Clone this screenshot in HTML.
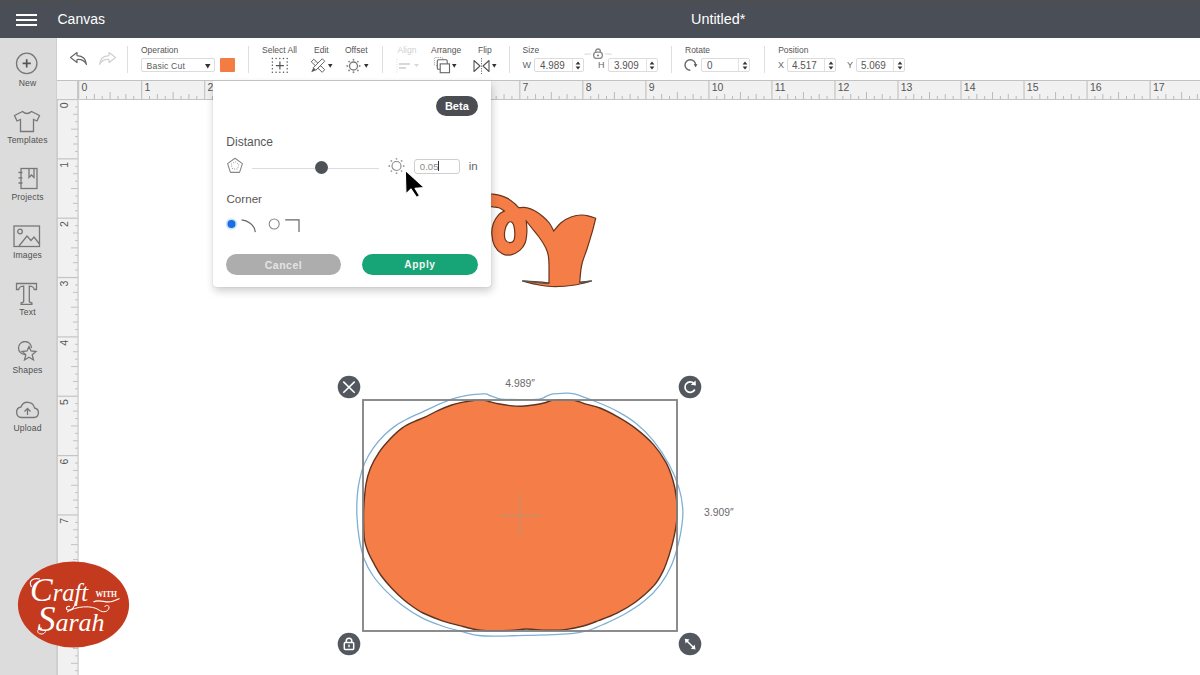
<!DOCTYPE html><html><head><meta charset="utf-8"><title>Canvas</title><style>
*{margin:0;padding:0;box-sizing:border-box}
html,body{width:1200px;height:675px;overflow:hidden;background:#fff;font-family:"Liberation Sans",sans-serif}
.a{position:absolute}
#hdr{left:0;top:0;width:1200px;height:38px;background:linear-gradient(#4b4e52 0,#4b4e52 5px,#4a4e56 6px)}
#side{left:0;top:38px;width:57px;height:637px;background:#dcdcdc;border-right:1px solid #cfcfcf}
#tool{left:57px;top:38px;width:1143px;height:42.5px;background:#fff;border-bottom:1.5px solid #c6c6c6}
.lbl{font-size:8.5px;color:#555;white-space:nowrap;line-height:1;margin-top:0.5px}
.slbl{font-size:8.6px;color:#505050;white-space:nowrap;line-height:1;text-align:center;width:55px;left:0;letter-spacing:0.15px}
.sep{width:1px;background:#dedede;top:46px;height:27px}
.inp{border:1px solid #dcdcdc;border-radius:2px;height:14px;background:#fff}
.inp span{position:absolute;left:5px;top:1.6px;font-size:10px;color:#555;line-height:1}
.spin{position:absolute;right:0;top:0;width:10px;height:12px;border-left:1px solid #e2e2e2}
</style></head><body>
<div id="hdr" class="a">
<div class="a" style="left:16px;top:14px;width:21px;height:2px;background:#fff"></div>
<div class="a" style="left:16px;top:19px;width:21px;height:2px;background:#fff"></div>
<div class="a" style="left:16px;top:24px;width:21px;height:2px;background:#fff"></div>
<div class="a" style="left:57.5px;top:10.6px;font-size:14px;color:#fff;line-height:17px">Canvas</div>
<div class="a" style="left:691px;top:10.6px;font-size:14.4px;color:#fff;line-height:17px">Untitled*</div>
</div>
<div id="side" class="a"></div>
<svg class="a" style="left:15px;top:52px" width="24" height="24" viewBox="0 0 24 24"><circle cx="11.7" cy="11.4" r="10.2" stroke="#777" stroke-width="1.3" fill="none"/><path d="M11.7 7.3v8.2M7.6 11.4h8.2" stroke="#555" stroke-width="1.7" fill="none"/></svg>
<div class="a slbl" style="top:78.5px">New</div>
<svg class="a" style="left:13px;top:110px" width="28" height="23" viewBox="0 0 28 23"><path d="M9.5 1.5 L1.5 5.5 L4 11 L7.5 9.5 L7.5 21.5 L20.5 21.5 L20.5 9.5 L24 11 L26.5 5.5 L18.5 1.5 Q14 5.5 9.5 1.5Z" stroke="#777" stroke-width="1.3" fill="none"/></svg>
<div class="a slbl" style="top:136px">Templates</div>
<svg class="a" style="left:17px;top:167px" width="22" height="23" viewBox="0 0 22 23"><rect x="4" y="1.5" width="16" height="20" stroke="#777" stroke-width="1.3" fill="none"/><path d="M12 1.5v9l2.5-2.5 2.5 2.5V1.5" stroke="#777" stroke-width="1.3" fill="none"/><path d="M1.5 5.5h4M1.5 10.8h4M1.5 16h4" stroke="#777" stroke-width="1.3" fill="none"/></svg>
<div class="a slbl" style="top:193px">Projects</div>
<svg class="a" style="left:13px;top:225px" width="28" height="23" viewBox="0 0 28 23"><rect x="1" y="1" width="25.5" height="20.5" stroke="#777" stroke-width="1.3" fill="none"/><circle cx="7" cy="6.5" r="2.3" stroke="#777" stroke-width="1.3" fill="none"/><path d="M6 21 L14 11 L18 15.5 L21 12 L26.5 19" stroke="#777" stroke-width="1.3" fill="none"/></svg>
<div class="a slbl" style="top:251px">Images</div>
<svg class="a" style="left:15px;top:282px" width="24" height="24" viewBox="0 0 24 24"><path d="M1.5 1.5h20v6h-2.2c-.6-2.5-1.4-3.4-5-3.4v15c0 1.2.8 1.7 2.6 1.9v1.3H6.1v-1.3c1.8-.2 2.6-.7 2.6-1.9v-15c-3.6 0-4.4.9-5 3.4H1.5z" stroke="#777" stroke-width="1.3" fill="none"/></svg>
<div class="a slbl" style="top:308px">Text</div>
<svg class="a" style="left:16px;top:341px" width="22" height="22" viewBox="0 0 22 22"><path d="M9 13.5 A6.5 6.5 0 1 1 15.5 7" stroke="#777" stroke-width="1.3" fill="none"/><path d="M13 5.5 L15 10 L20 10.5 L16.2 13.8 L17.5 19 L13 16.3 L8.5 19 L9.8 13.8 L6 10.5 L11 10Z" stroke="#777" stroke-width="1.3" fill="none"/></svg>
<div class="a slbl" style="top:366px">Shapes</div>
<svg class="a" style="left:15px;top:400px" width="25" height="19" viewBox="0 0 25 19"><path d="M6.5 17.5 H19 A4.8 4.8 0 0 0 19.5 8 A7 7 0 0 0 6 7 A5.3 5.3 0 0 0 6.5 17.5Z" stroke="#777" stroke-width="1.3" fill="none"/><path d="M12.5 15V8.5M9.5 11.5l3-3 3 3" stroke="#777" stroke-width="1.3" fill="none"/></svg>
<div class="a slbl" style="top:424px">Upload</div>
<div id="tool" class="a"></div>
<svg class="a" style="left:69px;top:51px" width="20" height="16" viewBox="0 0 20 16"><path d="M8 1.5 L1.5 6.5 L8 11.5 L8 8.5 C12 8.2 15.5 9.5 17.5 13.5 C17 8 13.5 4.8 8 4.6Z" stroke="#666" stroke-width="1.2" fill="none" stroke-linejoin="round"/></svg>
<svg class="a" style="left:97px;top:51px" width="20" height="16" viewBox="0 0 20 16"><path d="M12 1.5 L18.5 6.5 L12 11.5 L12 8.5 C8 8.2 4.5 9.5 2.5 13.5 C3 8 6.5 4.8 12 4.6Z" stroke="#d0d0d0" stroke-width="1.2" fill="none" stroke-linejoin="round"/></svg>
<div class="a sep" style="left:127px"></div>
<div class="a lbl" style="left:141px;top:45px">Operation</div>
<div class="a inp" style="left:140.5px;top:58px;width:74px"><span style="left:5px;top:2.6px;font-size:8.6px;letter-spacing:0.2px;color:#5a5a5a">Basic Cut</span></div>
<svg class="a" style="left:205px;top:63.5px" width="6" height="5" viewBox="0 0 6 5"><path d="M0 0h5.5L2.75 4.5z" fill="#333"/></svg>
<div class="a" style="left:219.7px;top:58px;width:15.5px;height:14.2px;background:#f27c42;border-radius:1px"></div>
<div class="a sep" style="left:248px"></div>
<div class="a lbl" style="left:262px;top:45px">Select All</div>
<svg class="a" style="left:268px;top:54px" width="24" height="22" viewBox="0 0 24 22"><g fill="#555"><circle cx="4.4" cy="4.4" r="0.75"/><circle cx="4.4" cy="7.9" r="0.75"/><circle cx="4.4" cy="11.3" r="0.75"/><circle cx="4.4" cy="14.8" r="0.75"/><circle cx="4.4" cy="18.3" r="0.75"/><circle cx="8.1" cy="4.4" r="0.75"/><circle cx="8.1" cy="18.3" r="0.75"/><circle cx="11.8" cy="4.4" r="0.75"/><circle cx="11.8" cy="18.3" r="0.75"/><circle cx="15.5" cy="4.4" r="0.75"/><circle cx="15.5" cy="18.3" r="0.75"/><circle cx="19.2" cy="4.4" r="0.75"/><circle cx="19.2" cy="7.9" r="0.75"/><circle cx="19.2" cy="11.3" r="0.75"/><circle cx="19.2" cy="14.8" r="0.75"/><circle cx="19.2" cy="18.3" r="0.75"/></g><path d="M11.9 7.6v8M7.9 11.6h8" stroke="#555" stroke-width="1.2"/></svg>
<div class="a lbl" style="left:314px;top:45px">Edit</div>
<svg class="a" style="left:310px;top:58px" width="17" height="15" viewBox="0 0 17 15"><path d="M3.74 1.2 L14.74 11.7 L12.26 14.3 L1.26 3.8Z" stroke="#666" stroke-width="1" fill="#fff"/><path d="M4.5 4.5l1-1M7 6.8l1-1M9.5 9.1l1-1" stroke="#888" stroke-width="0.8"/><path d="M5.77 12.27 L14.77 3.27 L12.23 0.73 L3.23 9.73Z" stroke="#666" stroke-width="1" fill="#fff"/><path d="M3.23 9.73 L5.77 12.27 L1.3 14.2Z" fill="#555"/></svg>
<svg class="a" style="left:328px;top:63.5px" width="5" height="4" viewBox="0 0 5 4"><path d="M0 0h4.5L2.25 3.8z" fill="#333"/></svg>
<div class="a lbl" style="left:345px;top:45px">Offset</div>
<svg class="a" style="left:346px;top:58px" width="16" height="16" viewBox="0 0 16 16"><circle cx="7.5" cy="8" r="4" stroke="#777" stroke-width="1.3" fill="none"/><g fill="#888"><circle cx="13.70" cy="8.00" r="0.95"/><circle cx="11.88" cy="12.38" r="0.95"/><circle cx="7.50" cy="14.20" r="0.95"/><circle cx="3.12" cy="12.38" r="0.95"/><circle cx="1.30" cy="8.00" r="0.95"/><circle cx="3.12" cy="3.62" r="0.95"/><circle cx="7.50" cy="1.80" r="0.95"/><circle cx="11.88" cy="3.62" r="0.95"/></g></svg>
<svg class="a" style="left:364px;top:63.5px" width="5" height="4" viewBox="0 0 5 4"><path d="M0 0h4.5L2.25 3.8z" fill="#333"/></svg>
<div class="a sep" style="left:382px"></div>
<div class="a lbl" style="left:397.5px;top:45px;color:#cfcfcf">Align</div>
<svg class="a" style="left:396px;top:58px" width="24" height="16" viewBox="0 0 24 16"><path d="M1 1v14" stroke="#ddd" stroke-dasharray="1 1.5"/><path d="M3 6h11M3 10h7" stroke="#d8d8d8" stroke-width="2"/><path d="M18 6h5l-2.5 3z" fill="#d8d8d8"/></svg>
<div class="a lbl" style="left:431px;top:45px">Arrange</div>
<svg class="a" style="left:433px;top:56px" width="18" height="18" viewBox="0 0 18 18"><rect x="1.4" y="1.5" width="8.4" height="8" rx="1" stroke="#999" stroke-width="0.9" stroke-dasharray="1.2 1" fill="none"/><rect x="4.3" y="3.8" width="9.9" height="9.4" rx="1" stroke="#666" stroke-width="1.1" fill="#fff"/><rect x="7.2" y="7.9" width="9.3" height="8.8" stroke="#666" stroke-width="1.1" fill="#fff"/></svg>
<svg class="a" style="left:451.8px;top:63.8px" width="5" height="4" viewBox="0 0 5 4"><path d="M0 0h4.5L2.25 3.8z" fill="#333"/></svg>
<div class="a lbl" style="left:478px;top:45px">Flip</div>
<svg class="a" style="left:473px;top:58px" width="17" height="16" viewBox="0 0 17 16"><path d="M1 2.5v11l6-5.5z" stroke="#555" stroke-width="1.1" fill="none" stroke-linejoin="round"/><path d="M16 2.5v11l-6-5.5z" stroke="#555" stroke-width="1.1" fill="none" stroke-linejoin="round"/><path d="M8.5 0v16" stroke="#777" stroke-width="1" stroke-dasharray="1.3 1.2"/></svg>
<svg class="a" style="left:492px;top:63.5px" width="5" height="4" viewBox="0 0 5 4"><path d="M0 0h4.5L2.25 3.8z" fill="#333"/></svg>
<div class="a sep" style="left:509px"></div>
<div class="a lbl" style="left:522.6px;top:45px">Size</div>
<div class="a lbl" style="left:522.6px;top:60.5px;font-size:9px;color:#666">W</div>
<div class="a inp" style="left:534.2px;top:58.2px;width:49.4px;height:13.9px"><span style="left:4.6px;top:0.9px;font-size:10.6px;transform:scaleX(0.93);transform-origin:0 0">4.989</span><div class="spin" style="width:11px;height:11.9px"><svg class="a" style="left:2.6px;top:1.5px" width="6" height="9" viewBox="0 0 6 9"><path d="M0.6 3.6L3 0.4 5.4 3.6zM0.6 5.4L3 8.6 5.4 5.4z" fill="#333"/></svg></div></div>
<svg class="a" style="left:584px;top:47px" width="28" height="12" viewBox="0 0 28 12"><path d="M1 8V7h6M21 7h6v1" stroke="#d4d4d4" stroke-width="0.9" fill="none"/><rect x="9.6" y="5.2" width="8.8" height="6.3" rx="3" stroke="#888" stroke-width="1.3" fill="#fff"/><path d="M11.6 5.6V4.4a2.4 2.4 0 0 1 4.8 0v1.2" stroke="#888" stroke-width="1.3" fill="none"/><circle cx="14" cy="8.4" r="0.9" fill="#666"/></svg>
<div class="a lbl" style="left:598px;top:60.5px;font-size:9px;color:#666">H</div>
<div class="a inp" style="left:608.4000000000001px;top:58.2px;width:49.4px;height:13.9px"><span style="left:4.6px;top:0.9px;font-size:10.6px;transform:scaleX(0.93);transform-origin:0 0">3.909</span><div class="spin" style="width:11px;height:11.9px"><svg class="a" style="left:2.6px;top:1.5px" width="6" height="9" viewBox="0 0 6 9"><path d="M0.6 3.6L3 0.4 5.4 3.6zM0.6 5.4L3 8.6 5.4 5.4z" fill="#333"/></svg></div></div>
<div class="a sep" style="left:671px"></div>
<div class="a lbl" style="left:685px;top:45px">Rotate</div>
<svg class="a" style="left:684px;top:58px" width="14" height="14" viewBox="0 0 14 14"><path d="M6.3 12.3 A5.3 5.3 0 1 1 11.6 7" stroke="#666" stroke-width="1.4" fill="none"/><path d="M9.7 6.3 L13.5 6.3 L11.6 9.2Z" fill="#555"/></svg>
<div class="a inp" style="left:701.0px;top:58.2px;width:49.4px;height:13.9px"><span style="left:4.6px;top:0.9px;font-size:10.6px;transform:scaleX(0.93);transform-origin:0 0">0</span><div class="spin" style="width:11px;height:11.9px"><svg class="a" style="left:2.6px;top:1.5px" width="6" height="9" viewBox="0 0 6 9"><path d="M0.6 3.6L3 0.4 5.4 3.6zM0.6 5.4L3 8.6 5.4 5.4z" fill="#333"/></svg></div></div>
<div class="a sep" style="left:764px"></div>
<div class="a lbl" style="left:778.2px;top:45px">Position</div>
<div class="a lbl" style="left:778px;top:60.5px;font-size:9px;color:#666">X</div>
<div class="a inp" style="left:786.7px;top:58.2px;width:49.4px;height:13.9px"><span style="left:4.6px;top:0.9px;font-size:10.6px;transform:scaleX(0.93);transform-origin:0 0">4.517</span><div class="spin" style="width:11px;height:11.9px"><svg class="a" style="left:2.6px;top:1.5px" width="6" height="9" viewBox="0 0 6 9"><path d="M0.6 3.6L3 0.4 5.4 3.6zM0.6 5.4L3 8.6 5.4 5.4z" fill="#333"/></svg></div></div>
<div class="a lbl" style="left:847px;top:60.5px;font-size:9px;color:#666">Y</div>
<div class="a inp" style="left:855.6px;top:58.2px;width:49.9px;height:13.9px"><span style="left:4.6px;top:0.9px;font-size:10.6px;transform:scaleX(0.93);transform-origin:0 0">5.069</span><div class="spin" style="width:11px;height:11.9px"><svg class="a" style="left:2.6px;top:1.5px" width="6" height="9" viewBox="0 0 6 9"><path d="M0.6 3.6L3 0.4 5.4 3.6zM0.6 5.4L3 8.6 5.4 5.4z" fill="#333"/></svg></div></div>
<div class="a" style="left:57px;top:80px;width:21px;height:20px;background:#f0f0f0;border-right:1px solid #c8c8c8;border-bottom:1px solid #c8c8c8"></div>
<svg class="a" style="left:78px;top:80px;background:#f1f1f1" width="1122" height="20" viewBox="0 0 1122 20" font-family="Liberation Sans"><line x1="0" y1="19.5" x2="1122" y2="19.5" stroke="#c4c4c4"/><line x1="0.60" y1="0" x2="0.60" y2="19" stroke="#c4c4c4" stroke-width="1.2"/><text x="3.40" y="10.8" font-size="10.5" fill="#555">0</text><line x1="8.48" y1="16" x2="8.48" y2="19" stroke="#bababa" stroke-width="1"/><line x1="16.36" y1="14" x2="16.36" y2="19" stroke="#bababa" stroke-width="1"/><line x1="24.24" y1="16" x2="24.24" y2="19" stroke="#bababa" stroke-width="1"/><line x1="32.11" y1="12" x2="32.11" y2="19" stroke="#bababa" stroke-width="1"/><line x1="39.99" y1="16" x2="39.99" y2="19" stroke="#bababa" stroke-width="1"/><line x1="47.87" y1="14" x2="47.87" y2="19" stroke="#bababa" stroke-width="1"/><line x1="55.75" y1="16" x2="55.75" y2="19" stroke="#bababa" stroke-width="1"/><line x1="63.63" y1="0" x2="63.63" y2="19" stroke="#c4c4c4" stroke-width="1.2"/><text x="66.43" y="10.8" font-size="10.5" fill="#555">1</text><line x1="71.51" y1="16" x2="71.51" y2="19" stroke="#bababa" stroke-width="1"/><line x1="79.39" y1="14" x2="79.39" y2="19" stroke="#bababa" stroke-width="1"/><line x1="87.27" y1="16" x2="87.27" y2="19" stroke="#bababa" stroke-width="1"/><line x1="95.14" y1="12" x2="95.14" y2="19" stroke="#bababa" stroke-width="1"/><line x1="103.02" y1="16" x2="103.02" y2="19" stroke="#bababa" stroke-width="1"/><line x1="110.90" y1="14" x2="110.90" y2="19" stroke="#bababa" stroke-width="1"/><line x1="118.78" y1="16" x2="118.78" y2="19" stroke="#bababa" stroke-width="1"/><line x1="126.66" y1="0" x2="126.66" y2="19" stroke="#c4c4c4" stroke-width="1.2"/><text x="129.46" y="10.8" font-size="10.5" fill="#555">2</text><line x1="134.54" y1="16" x2="134.54" y2="19" stroke="#bababa" stroke-width="1"/><line x1="142.42" y1="14" x2="142.42" y2="19" stroke="#bababa" stroke-width="1"/><line x1="150.30" y1="16" x2="150.30" y2="19" stroke="#bababa" stroke-width="1"/><line x1="158.18" y1="12" x2="158.18" y2="19" stroke="#bababa" stroke-width="1"/><line x1="166.05" y1="16" x2="166.05" y2="19" stroke="#bababa" stroke-width="1"/><line x1="173.93" y1="14" x2="173.93" y2="19" stroke="#bababa" stroke-width="1"/><line x1="181.81" y1="16" x2="181.81" y2="19" stroke="#bababa" stroke-width="1"/><line x1="189.69" y1="0" x2="189.69" y2="19" stroke="#c4c4c4" stroke-width="1.2"/><text x="192.49" y="10.8" font-size="10.5" fill="#555">3</text><line x1="197.57" y1="16" x2="197.57" y2="19" stroke="#bababa" stroke-width="1"/><line x1="205.45" y1="14" x2="205.45" y2="19" stroke="#bababa" stroke-width="1"/><line x1="213.33" y1="16" x2="213.33" y2="19" stroke="#bababa" stroke-width="1"/><line x1="221.20" y1="12" x2="221.20" y2="19" stroke="#bababa" stroke-width="1"/><line x1="229.08" y1="16" x2="229.08" y2="19" stroke="#bababa" stroke-width="1"/><line x1="236.96" y1="14" x2="236.96" y2="19" stroke="#bababa" stroke-width="1"/><line x1="244.84" y1="16" x2="244.84" y2="19" stroke="#bababa" stroke-width="1"/><line x1="252.72" y1="0" x2="252.72" y2="19" stroke="#c4c4c4" stroke-width="1.2"/><text x="255.52" y="10.8" font-size="10.5" fill="#555">4</text><line x1="260.60" y1="16" x2="260.60" y2="19" stroke="#bababa" stroke-width="1"/><line x1="268.48" y1="14" x2="268.48" y2="19" stroke="#bababa" stroke-width="1"/><line x1="276.36" y1="16" x2="276.36" y2="19" stroke="#bababa" stroke-width="1"/><line x1="284.24" y1="12" x2="284.24" y2="19" stroke="#bababa" stroke-width="1"/><line x1="292.11" y1="16" x2="292.11" y2="19" stroke="#bababa" stroke-width="1"/><line x1="299.99" y1="14" x2="299.99" y2="19" stroke="#bababa" stroke-width="1"/><line x1="307.87" y1="16" x2="307.87" y2="19" stroke="#bababa" stroke-width="1"/><line x1="315.75" y1="0" x2="315.75" y2="19" stroke="#c4c4c4" stroke-width="1.2"/><text x="318.55" y="10.8" font-size="10.5" fill="#555">5</text><line x1="323.63" y1="16" x2="323.63" y2="19" stroke="#bababa" stroke-width="1"/><line x1="331.51" y1="14" x2="331.51" y2="19" stroke="#bababa" stroke-width="1"/><line x1="339.39" y1="16" x2="339.39" y2="19" stroke="#bababa" stroke-width="1"/><line x1="347.26" y1="12" x2="347.26" y2="19" stroke="#bababa" stroke-width="1"/><line x1="355.14" y1="16" x2="355.14" y2="19" stroke="#bababa" stroke-width="1"/><line x1="363.02" y1="14" x2="363.02" y2="19" stroke="#bababa" stroke-width="1"/><line x1="370.90" y1="16" x2="370.90" y2="19" stroke="#bababa" stroke-width="1"/><line x1="378.78" y1="0" x2="378.78" y2="19" stroke="#c4c4c4" stroke-width="1.2"/><text x="381.58" y="10.8" font-size="10.5" fill="#555">6</text><line x1="386.66" y1="16" x2="386.66" y2="19" stroke="#bababa" stroke-width="1"/><line x1="394.54" y1="14" x2="394.54" y2="19" stroke="#bababa" stroke-width="1"/><line x1="402.42" y1="16" x2="402.42" y2="19" stroke="#bababa" stroke-width="1"/><line x1="410.29" y1="12" x2="410.29" y2="19" stroke="#bababa" stroke-width="1"/><line x1="418.17" y1="16" x2="418.17" y2="19" stroke="#bababa" stroke-width="1"/><line x1="426.05" y1="14" x2="426.05" y2="19" stroke="#bababa" stroke-width="1"/><line x1="433.93" y1="16" x2="433.93" y2="19" stroke="#bababa" stroke-width="1"/><line x1="441.81" y1="0" x2="441.81" y2="19" stroke="#c4c4c4" stroke-width="1.2"/><text x="444.61" y="10.8" font-size="10.5" fill="#555">7</text><line x1="449.69" y1="16" x2="449.69" y2="19" stroke="#bababa" stroke-width="1"/><line x1="457.57" y1="14" x2="457.57" y2="19" stroke="#bababa" stroke-width="1"/><line x1="465.45" y1="16" x2="465.45" y2="19" stroke="#bababa" stroke-width="1"/><line x1="473.33" y1="12" x2="473.33" y2="19" stroke="#bababa" stroke-width="1"/><line x1="481.20" y1="16" x2="481.20" y2="19" stroke="#bababa" stroke-width="1"/><line x1="489.08" y1="14" x2="489.08" y2="19" stroke="#bababa" stroke-width="1"/><line x1="496.96" y1="16" x2="496.96" y2="19" stroke="#bababa" stroke-width="1"/><line x1="504.84" y1="0" x2="504.84" y2="19" stroke="#c4c4c4" stroke-width="1.2"/><text x="507.64" y="10.8" font-size="10.5" fill="#555">8</text><line x1="512.72" y1="16" x2="512.72" y2="19" stroke="#bababa" stroke-width="1"/><line x1="520.60" y1="14" x2="520.60" y2="19" stroke="#bababa" stroke-width="1"/><line x1="528.48" y1="16" x2="528.48" y2="19" stroke="#bababa" stroke-width="1"/><line x1="536.36" y1="12" x2="536.36" y2="19" stroke="#bababa" stroke-width="1"/><line x1="544.23" y1="16" x2="544.23" y2="19" stroke="#bababa" stroke-width="1"/><line x1="552.11" y1="14" x2="552.11" y2="19" stroke="#bababa" stroke-width="1"/><line x1="559.99" y1="16" x2="559.99" y2="19" stroke="#bababa" stroke-width="1"/><line x1="567.87" y1="0" x2="567.87" y2="19" stroke="#c4c4c4" stroke-width="1.2"/><text x="570.67" y="10.8" font-size="10.5" fill="#555">9</text><line x1="575.75" y1="16" x2="575.75" y2="19" stroke="#bababa" stroke-width="1"/><line x1="583.63" y1="14" x2="583.63" y2="19" stroke="#bababa" stroke-width="1"/><line x1="591.51" y1="16" x2="591.51" y2="19" stroke="#bababa" stroke-width="1"/><line x1="599.38" y1="12" x2="599.38" y2="19" stroke="#bababa" stroke-width="1"/><line x1="607.26" y1="16" x2="607.26" y2="19" stroke="#bababa" stroke-width="1"/><line x1="615.14" y1="14" x2="615.14" y2="19" stroke="#bababa" stroke-width="1"/><line x1="623.02" y1="16" x2="623.02" y2="19" stroke="#bababa" stroke-width="1"/><line x1="630.90" y1="0" x2="630.90" y2="19" stroke="#c4c4c4" stroke-width="1.2"/><text x="633.70" y="10.8" font-size="10.5" fill="#555">10</text><line x1="638.78" y1="16" x2="638.78" y2="19" stroke="#bababa" stroke-width="1"/><line x1="646.66" y1="14" x2="646.66" y2="19" stroke="#bababa" stroke-width="1"/><line x1="654.54" y1="16" x2="654.54" y2="19" stroke="#bababa" stroke-width="1"/><line x1="662.41" y1="12" x2="662.41" y2="19" stroke="#bababa" stroke-width="1"/><line x1="670.29" y1="16" x2="670.29" y2="19" stroke="#bababa" stroke-width="1"/><line x1="678.17" y1="14" x2="678.17" y2="19" stroke="#bababa" stroke-width="1"/><line x1="686.05" y1="16" x2="686.05" y2="19" stroke="#bababa" stroke-width="1"/><line x1="693.93" y1="0" x2="693.93" y2="19" stroke="#c4c4c4" stroke-width="1.2"/><text x="696.73" y="10.8" font-size="10.5" fill="#555">11</text><line x1="701.81" y1="16" x2="701.81" y2="19" stroke="#bababa" stroke-width="1"/><line x1="709.69" y1="14" x2="709.69" y2="19" stroke="#bababa" stroke-width="1"/><line x1="717.57" y1="16" x2="717.57" y2="19" stroke="#bababa" stroke-width="1"/><line x1="725.45" y1="12" x2="725.45" y2="19" stroke="#bababa" stroke-width="1"/><line x1="733.32" y1="16" x2="733.32" y2="19" stroke="#bababa" stroke-width="1"/><line x1="741.20" y1="14" x2="741.20" y2="19" stroke="#bababa" stroke-width="1"/><line x1="749.08" y1="16" x2="749.08" y2="19" stroke="#bababa" stroke-width="1"/><line x1="756.96" y1="0" x2="756.96" y2="19" stroke="#c4c4c4" stroke-width="1.2"/><text x="759.76" y="10.8" font-size="10.5" fill="#555">12</text><line x1="764.84" y1="16" x2="764.84" y2="19" stroke="#bababa" stroke-width="1"/><line x1="772.72" y1="14" x2="772.72" y2="19" stroke="#bababa" stroke-width="1"/><line x1="780.60" y1="16" x2="780.60" y2="19" stroke="#bababa" stroke-width="1"/><line x1="788.48" y1="12" x2="788.48" y2="19" stroke="#bababa" stroke-width="1"/><line x1="796.35" y1="16" x2="796.35" y2="19" stroke="#bababa" stroke-width="1"/><line x1="804.23" y1="14" x2="804.23" y2="19" stroke="#bababa" stroke-width="1"/><line x1="812.11" y1="16" x2="812.11" y2="19" stroke="#bababa" stroke-width="1"/><line x1="819.99" y1="0" x2="819.99" y2="19" stroke="#c4c4c4" stroke-width="1.2"/><text x="822.79" y="10.8" font-size="10.5" fill="#555">13</text><line x1="827.87" y1="16" x2="827.87" y2="19" stroke="#bababa" stroke-width="1"/><line x1="835.75" y1="14" x2="835.75" y2="19" stroke="#bababa" stroke-width="1"/><line x1="843.63" y1="16" x2="843.63" y2="19" stroke="#bababa" stroke-width="1"/><line x1="851.50" y1="12" x2="851.50" y2="19" stroke="#bababa" stroke-width="1"/><line x1="859.38" y1="16" x2="859.38" y2="19" stroke="#bababa" stroke-width="1"/><line x1="867.26" y1="14" x2="867.26" y2="19" stroke="#bababa" stroke-width="1"/><line x1="875.14" y1="16" x2="875.14" y2="19" stroke="#bababa" stroke-width="1"/><line x1="883.02" y1="0" x2="883.02" y2="19" stroke="#c4c4c4" stroke-width="1.2"/><text x="885.82" y="10.8" font-size="10.5" fill="#555">14</text><line x1="890.90" y1="16" x2="890.90" y2="19" stroke="#bababa" stroke-width="1"/><line x1="898.78" y1="14" x2="898.78" y2="19" stroke="#bababa" stroke-width="1"/><line x1="906.66" y1="16" x2="906.66" y2="19" stroke="#bababa" stroke-width="1"/><line x1="914.54" y1="12" x2="914.54" y2="19" stroke="#bababa" stroke-width="1"/><line x1="922.41" y1="16" x2="922.41" y2="19" stroke="#bababa" stroke-width="1"/><line x1="930.29" y1="14" x2="930.29" y2="19" stroke="#bababa" stroke-width="1"/><line x1="938.17" y1="16" x2="938.17" y2="19" stroke="#bababa" stroke-width="1"/><line x1="946.05" y1="0" x2="946.05" y2="19" stroke="#c4c4c4" stroke-width="1.2"/><text x="948.85" y="10.8" font-size="10.5" fill="#555">15</text><line x1="953.93" y1="16" x2="953.93" y2="19" stroke="#bababa" stroke-width="1"/><line x1="961.81" y1="14" x2="961.81" y2="19" stroke="#bababa" stroke-width="1"/><line x1="969.69" y1="16" x2="969.69" y2="19" stroke="#bababa" stroke-width="1"/><line x1="977.57" y1="12" x2="977.57" y2="19" stroke="#bababa" stroke-width="1"/><line x1="985.44" y1="16" x2="985.44" y2="19" stroke="#bababa" stroke-width="1"/><line x1="993.32" y1="14" x2="993.32" y2="19" stroke="#bababa" stroke-width="1"/><line x1="1001.20" y1="16" x2="1001.20" y2="19" stroke="#bababa" stroke-width="1"/><line x1="1009.08" y1="0" x2="1009.08" y2="19" stroke="#c4c4c4" stroke-width="1.2"/><text x="1011.88" y="10.8" font-size="10.5" fill="#555">16</text><line x1="1016.96" y1="16" x2="1016.96" y2="19" stroke="#bababa" stroke-width="1"/><line x1="1024.84" y1="14" x2="1024.84" y2="19" stroke="#bababa" stroke-width="1"/><line x1="1032.72" y1="16" x2="1032.72" y2="19" stroke="#bababa" stroke-width="1"/><line x1="1040.60" y1="12" x2="1040.60" y2="19" stroke="#bababa" stroke-width="1"/><line x1="1048.47" y1="16" x2="1048.47" y2="19" stroke="#bababa" stroke-width="1"/><line x1="1056.35" y1="14" x2="1056.35" y2="19" stroke="#bababa" stroke-width="1"/><line x1="1064.23" y1="16" x2="1064.23" y2="19" stroke="#bababa" stroke-width="1"/><line x1="1072.11" y1="0" x2="1072.11" y2="19" stroke="#c4c4c4" stroke-width="1.2"/><text x="1074.91" y="10.8" font-size="10.5" fill="#555">17</text><line x1="1079.99" y1="16" x2="1079.99" y2="19" stroke="#bababa" stroke-width="1"/><line x1="1087.87" y1="14" x2="1087.87" y2="19" stroke="#bababa" stroke-width="1"/><line x1="1095.75" y1="16" x2="1095.75" y2="19" stroke="#bababa" stroke-width="1"/><line x1="1103.62" y1="12" x2="1103.62" y2="19" stroke="#bababa" stroke-width="1"/><line x1="1111.50" y1="16" x2="1111.50" y2="19" stroke="#bababa" stroke-width="1"/><line x1="1119.38" y1="14" x2="1119.38" y2="19" stroke="#bababa" stroke-width="1"/><line x1="1127.26" y1="16" x2="1127.26" y2="19" stroke="#bababa" stroke-width="1"/></svg>
<svg class="a" style="left:57px;top:99px;background:#f1f1f1" width="22" height="576" viewBox="0 0 22 576" font-family="Liberation Sans"><line x1="0.5" y1="0" x2="0.5" y2="576" stroke="#cdcdcd"/><line x1="21" y1="0" x2="21" y2="576" stroke="#c4c4c4"/><line x1="0" y1="0.50" x2="21" y2="0.50" stroke="#c4c4c4" stroke-width="1.2"/><text transform="translate(10.8 3.50) rotate(-90)" text-anchor="end" font-size="10.5" fill="#555">0</text><line x1="18" y1="7.92" x2="21" y2="7.92" stroke="#c2c2c2" stroke-width="1"/><line x1="16" y1="15.34" x2="21" y2="15.34" stroke="#c2c2c2" stroke-width="1"/><line x1="18" y1="22.76" x2="21" y2="22.76" stroke="#c2c2c2" stroke-width="1"/><line x1="14" y1="30.18" x2="21" y2="30.18" stroke="#c2c2c2" stroke-width="1"/><line x1="18" y1="37.59" x2="21" y2="37.59" stroke="#c2c2c2" stroke-width="1"/><line x1="16" y1="45.01" x2="21" y2="45.01" stroke="#c2c2c2" stroke-width="1"/><line x1="18" y1="52.43" x2="21" y2="52.43" stroke="#c2c2c2" stroke-width="1"/><line x1="0" y1="59.85" x2="21" y2="59.85" stroke="#c4c4c4" stroke-width="1.2"/><text transform="translate(10.8 62.85) rotate(-90)" text-anchor="end" font-size="10.5" fill="#555">1</text><line x1="18" y1="67.27" x2="21" y2="67.27" stroke="#c2c2c2" stroke-width="1"/><line x1="16" y1="74.69" x2="21" y2="74.69" stroke="#c2c2c2" stroke-width="1"/><line x1="18" y1="82.11" x2="21" y2="82.11" stroke="#c2c2c2" stroke-width="1"/><line x1="14" y1="89.52" x2="21" y2="89.52" stroke="#c2c2c2" stroke-width="1"/><line x1="18" y1="96.94" x2="21" y2="96.94" stroke="#c2c2c2" stroke-width="1"/><line x1="16" y1="104.36" x2="21" y2="104.36" stroke="#c2c2c2" stroke-width="1"/><line x1="18" y1="111.78" x2="21" y2="111.78" stroke="#c2c2c2" stroke-width="1"/><line x1="0" y1="119.20" x2="21" y2="119.20" stroke="#c4c4c4" stroke-width="1.2"/><text transform="translate(10.8 122.20) rotate(-90)" text-anchor="end" font-size="10.5" fill="#555">2</text><line x1="18" y1="126.62" x2="21" y2="126.62" stroke="#c2c2c2" stroke-width="1"/><line x1="16" y1="134.04" x2="21" y2="134.04" stroke="#c2c2c2" stroke-width="1"/><line x1="18" y1="141.46" x2="21" y2="141.46" stroke="#c2c2c2" stroke-width="1"/><line x1="14" y1="148.88" x2="21" y2="148.88" stroke="#c2c2c2" stroke-width="1"/><line x1="18" y1="156.29" x2="21" y2="156.29" stroke="#c2c2c2" stroke-width="1"/><line x1="16" y1="163.71" x2="21" y2="163.71" stroke="#c2c2c2" stroke-width="1"/><line x1="18" y1="171.13" x2="21" y2="171.13" stroke="#c2c2c2" stroke-width="1"/><line x1="0" y1="178.55" x2="21" y2="178.55" stroke="#c4c4c4" stroke-width="1.2"/><text transform="translate(10.8 181.55) rotate(-90)" text-anchor="end" font-size="10.5" fill="#555">3</text><line x1="18" y1="185.97" x2="21" y2="185.97" stroke="#c2c2c2" stroke-width="1"/><line x1="16" y1="193.39" x2="21" y2="193.39" stroke="#c2c2c2" stroke-width="1"/><line x1="18" y1="200.81" x2="21" y2="200.81" stroke="#c2c2c2" stroke-width="1"/><line x1="14" y1="208.23" x2="21" y2="208.23" stroke="#c2c2c2" stroke-width="1"/><line x1="18" y1="215.64" x2="21" y2="215.64" stroke="#c2c2c2" stroke-width="1"/><line x1="16" y1="223.06" x2="21" y2="223.06" stroke="#c2c2c2" stroke-width="1"/><line x1="18" y1="230.48" x2="21" y2="230.48" stroke="#c2c2c2" stroke-width="1"/><line x1="0" y1="237.90" x2="21" y2="237.90" stroke="#c4c4c4" stroke-width="1.2"/><text transform="translate(10.8 240.90) rotate(-90)" text-anchor="end" font-size="10.5" fill="#555">4</text><line x1="18" y1="245.32" x2="21" y2="245.32" stroke="#c2c2c2" stroke-width="1"/><line x1="16" y1="252.74" x2="21" y2="252.74" stroke="#c2c2c2" stroke-width="1"/><line x1="18" y1="260.16" x2="21" y2="260.16" stroke="#c2c2c2" stroke-width="1"/><line x1="14" y1="267.57" x2="21" y2="267.57" stroke="#c2c2c2" stroke-width="1"/><line x1="18" y1="274.99" x2="21" y2="274.99" stroke="#c2c2c2" stroke-width="1"/><line x1="16" y1="282.41" x2="21" y2="282.41" stroke="#c2c2c2" stroke-width="1"/><line x1="18" y1="289.83" x2="21" y2="289.83" stroke="#c2c2c2" stroke-width="1"/><line x1="0" y1="297.25" x2="21" y2="297.25" stroke="#c4c4c4" stroke-width="1.2"/><text transform="translate(10.8 300.25) rotate(-90)" text-anchor="end" font-size="10.5" fill="#555">5</text><line x1="18" y1="304.67" x2="21" y2="304.67" stroke="#c2c2c2" stroke-width="1"/><line x1="16" y1="312.09" x2="21" y2="312.09" stroke="#c2c2c2" stroke-width="1"/><line x1="18" y1="319.51" x2="21" y2="319.51" stroke="#c2c2c2" stroke-width="1"/><line x1="14" y1="326.93" x2="21" y2="326.93" stroke="#c2c2c2" stroke-width="1"/><line x1="18" y1="334.34" x2="21" y2="334.34" stroke="#c2c2c2" stroke-width="1"/><line x1="16" y1="341.76" x2="21" y2="341.76" stroke="#c2c2c2" stroke-width="1"/><line x1="18" y1="349.18" x2="21" y2="349.18" stroke="#c2c2c2" stroke-width="1"/><line x1="0" y1="356.60" x2="21" y2="356.60" stroke="#c4c4c4" stroke-width="1.2"/><text transform="translate(10.8 359.60) rotate(-90)" text-anchor="end" font-size="10.5" fill="#555">6</text><line x1="18" y1="364.02" x2="21" y2="364.02" stroke="#c2c2c2" stroke-width="1"/><line x1="16" y1="371.44" x2="21" y2="371.44" stroke="#c2c2c2" stroke-width="1"/><line x1="18" y1="378.86" x2="21" y2="378.86" stroke="#c2c2c2" stroke-width="1"/><line x1="14" y1="386.28" x2="21" y2="386.28" stroke="#c2c2c2" stroke-width="1"/><line x1="18" y1="393.69" x2="21" y2="393.69" stroke="#c2c2c2" stroke-width="1"/><line x1="16" y1="401.11" x2="21" y2="401.11" stroke="#c2c2c2" stroke-width="1"/><line x1="18" y1="408.53" x2="21" y2="408.53" stroke="#c2c2c2" stroke-width="1"/><line x1="0" y1="415.95" x2="21" y2="415.95" stroke="#c4c4c4" stroke-width="1.2"/><text transform="translate(10.8 418.95) rotate(-90)" text-anchor="end" font-size="10.5" fill="#555">7</text><line x1="18" y1="423.37" x2="21" y2="423.37" stroke="#c2c2c2" stroke-width="1"/><line x1="16" y1="430.79" x2="21" y2="430.79" stroke="#c2c2c2" stroke-width="1"/><line x1="18" y1="438.21" x2="21" y2="438.21" stroke="#c2c2c2" stroke-width="1"/><line x1="14" y1="445.63" x2="21" y2="445.63" stroke="#c2c2c2" stroke-width="1"/><line x1="18" y1="453.04" x2="21" y2="453.04" stroke="#c2c2c2" stroke-width="1"/><line x1="16" y1="460.46" x2="21" y2="460.46" stroke="#c2c2c2" stroke-width="1"/><line x1="18" y1="467.88" x2="21" y2="467.88" stroke="#c2c2c2" stroke-width="1"/><line x1="0" y1="475.30" x2="21" y2="475.30" stroke="#c4c4c4" stroke-width="1.2"/><text transform="translate(10.8 478.30) rotate(-90)" text-anchor="end" font-size="10.5" fill="#555">8</text><line x1="18" y1="482.72" x2="21" y2="482.72" stroke="#c2c2c2" stroke-width="1"/><line x1="16" y1="490.14" x2="21" y2="490.14" stroke="#c2c2c2" stroke-width="1"/><line x1="18" y1="497.56" x2="21" y2="497.56" stroke="#c2c2c2" stroke-width="1"/><line x1="14" y1="504.97" x2="21" y2="504.97" stroke="#c2c2c2" stroke-width="1"/><line x1="18" y1="512.39" x2="21" y2="512.39" stroke="#c2c2c2" stroke-width="1"/><line x1="16" y1="519.81" x2="21" y2="519.81" stroke="#c2c2c2" stroke-width="1"/><line x1="18" y1="527.23" x2="21" y2="527.23" stroke="#c2c2c2" stroke-width="1"/><line x1="0" y1="534.65" x2="21" y2="534.65" stroke="#c4c4c4" stroke-width="1.2"/><text transform="translate(10.8 537.65) rotate(-90)" text-anchor="end" font-size="10.5" fill="#555">9</text><line x1="18" y1="542.07" x2="21" y2="542.07" stroke="#c2c2c2" stroke-width="1"/><line x1="16" y1="549.49" x2="21" y2="549.49" stroke="#c2c2c2" stroke-width="1"/><line x1="18" y1="556.91" x2="21" y2="556.91" stroke="#c2c2c2" stroke-width="1"/><line x1="14" y1="564.32" x2="21" y2="564.32" stroke="#c2c2c2" stroke-width="1"/><line x1="18" y1="571.74" x2="21" y2="571.74" stroke="#c2c2c2" stroke-width="1"/><line x1="16" y1="579.16" x2="21" y2="579.16" stroke="#c2c2c2" stroke-width="1"/><line x1="18" y1="586.58" x2="21" y2="586.58" stroke="#c2c2c2" stroke-width="1"/></svg>
<svg class="a" style="left:0;top:0" width="1200" height="675" viewBox="0 0 1200 675"><path d="M485 194 L491.3 194C492.6 194.2 496.3 194.4 499.0 195.1 C501.7 195.8 505.1 197.0 507.7 198.4 C510.2 199.8 512.5 201.8 514.3 203.3 C516.1 204.9 518.0 207.0 518.7 207.7C520.0 207.7 523.6 207.1 526.3 207.7 C529.0 208.2 532.4 209.5 535.1 211.0 C537.9 212.5 540.4 214.5 542.8 216.5 C545.2 218.5 547.5 220.6 549.3 223.0 C551.1 225.4 553.0 229.7 553.7 231.0C555.0 229.6 558.8 224.6 561.7 222.3 C564.6 220.0 567.7 218.2 571.0 217.0 C574.3 215.8 578.6 215.1 581.7 215.0 C584.8 214.9 587.4 215.8 589.7 216.3 C592.0 216.9 594.7 218.0 595.7 218.3C595.1 220.5 593.8 226.6 592.3 231.7 C590.8 236.8 588.8 243.4 587.0 249.0 C585.2 254.6 582.9 259.4 581.7 265.0 C580.5 270.6 580.0 279.4 579.7 282.3 L591.7 281C588.9 281.7 581.1 284.1 575.0 285.0 C568.9 285.9 561.0 286.6 555.0 286.6 C549.0 286.6 544.5 285.9 539.0 285.0 C533.5 284.1 525.1 281.7 522.3 281.0C524.4 281.1 530.5 281.4 535.0 281.7 C539.5 282.0 546.7 282.8 549.0 283.0C549.0 280.0 549.1 269.6 549.0 265.0 C548.9 260.4 548.8 258.6 548.3 255.7 C547.8 252.8 547.2 250.8 545.7 247.7 C544.2 244.6 541.5 240.4 539.0 237.0 C536.5 233.6 533.1 229.7 531.0 227.0 C528.9 224.3 527.1 222.0 526.3 221.0C526.4 222.8 527.1 228.2 526.9 231.8 C526.7 235.4 526.4 239.7 525.2 242.8 C524.0 245.9 522.2 248.4 519.8 250.4 C517.4 252.4 513.9 254.2 511.0 254.8 C508.1 255.4 504.9 255.2 502.2 253.7 C499.5 252.2 496.3 249.3 494.6 246.0 C492.9 242.7 492.0 237.8 491.8 234.0 C491.6 230.2 492.3 226.3 493.5 223.0 C494.7 219.7 497.2 216.3 499.0 214.3 C500.8 212.3 503.5 211.6 504.4 211.0C503.5 210.4 501.2 208.4 499.0 207.7 C496.8 207.0 492.6 206.8 491.3 206.6 L485 206.6Z" fill="#f47d48" stroke="#6a3519" stroke-width="1.2"/><path d="M511.5 222 C515 224 515.5 236 514 240 C512.5 243.5 507.5 243.5 505.5 240 C503.5 236 504.5 227 508 223 C509 222 510.5 221.5 511.5 222Z" fill="#fff" stroke="#6a3519" stroke-width="1.2"/><path d="M522.3 281 C535 282 545 283.5 549 283.5" stroke="#555" stroke-width="1.3" fill="none"/><path d="M579.7 282.5 C584 282 588 281.5 591.7 281" stroke="#555" stroke-width="1.3" fill="none"/><path d="M475.0 394.3 C478.7 393.9 483.0 393.7 485.5 393.9 C488.0 394.1 488.1 394.9 490.2 395.7 C492.3 396.5 496.0 398.0 498.3 398.6 C500.6 399.2 500.6 399.2 504.2 399.4 C507.8 399.6 514.2 399.6 520.0 399.6 C525.8 399.6 534.6 399.9 539.2 399.2 C543.8 398.5 545.1 396.6 547.4 395.7 C549.7 394.8 550.7 394.3 553.2 393.9 C555.7 393.5 559.0 393.3 562.5 393.3 C566.0 393.3 568.3 392.4 574.2 393.9 C580.1 395.4 590.7 399.6 598.0 402.5 C605.3 405.4 611.5 408.1 617.8 411.6 C624.1 415.0 629.7 418.3 635.6 423.1 C641.5 427.9 647.7 433.8 653.3 440.6 C658.9 447.5 664.8 456.5 669.1 464.5 C673.4 472.4 676.9 481.2 679.1 488.4 C681.4 495.7 682.2 501.9 682.7 507.9 C683.2 513.9 682.8 518.5 682.0 524.5 C681.3 530.4 680.1 536.9 678.4 543.7 C676.6 550.6 674.5 558.6 671.4 565.5 C668.4 572.4 664.6 579.0 660.1 584.9 C655.6 590.9 650.4 596.2 644.3 601.1 C638.3 606.0 630.8 610.6 624.0 614.5 C617.1 618.4 608.9 621.9 603.1 624.5 C597.4 627.1 594.0 628.6 589.7 630.0 C585.3 631.4 582.9 632.1 577.1 632.9 C571.3 633.7 563.6 634.2 554.9 634.7 C546.3 635.1 534.7 635.1 525.1 635.4 C515.5 635.6 505.2 636.1 497.5 636.1 C489.7 636.2 484.6 636.2 478.7 635.5 C472.8 634.8 468.1 633.3 462.1 631.7 C456.0 630.1 449.0 628.3 442.2 626.0 C435.5 623.7 428.2 621.1 421.6 617.6 C414.9 614.2 408.1 609.7 402.1 605.2 C396.1 600.7 390.5 595.6 385.6 590.6 C380.8 585.7 376.4 580.8 372.9 575.5 C369.3 570.2 366.5 565.1 364.2 558.9 C361.9 552.7 360.4 545.6 359.2 538.3 C358.0 531.1 357.2 522.7 356.9 515.5 C356.6 508.4 356.8 501.8 357.3 495.6 C357.7 489.5 358.5 484.2 359.8 478.8 C361.0 473.3 362.5 468.1 364.7 463.0 C367.0 457.8 370.1 452.5 373.4 447.8 C376.7 443.1 380.8 438.5 384.6 434.7 C388.5 430.9 392.4 427.9 396.5 425.1 C400.5 422.3 404.5 420.4 408.9 418.1 C413.3 415.9 418.0 414.0 422.8 411.8 C427.6 409.5 432.8 407.0 437.5 404.9 C442.2 402.8 446.8 400.7 451.1 399.3 C455.5 397.8 459.3 396.9 463.3 396.1 C467.3 395.2 471.3 394.7 475.0 394.3Z" fill="none" stroke="#7fb0d3" stroke-width="1.3"/><path d="M498.3 403.8 C501.8 404.5 506.1 405.2 510.0 405.6 C513.9 406.0 517.8 406.3 521.7 406.2 C525.6 406.1 529.5 405.6 533.4 405.0 C537.3 404.4 541.9 403.5 545.0 402.7 C548.1 401.9 549.1 400.8 552.0 400.3 C554.9 399.8 558.8 399.8 562.5 399.8 C566.2 399.8 570.5 399.6 574.2 400.3 C578.0 401.0 580.7 402.5 585.0 403.8 C589.3 405.1 594.5 405.8 600.0 408.0 C605.5 410.2 611.9 413.5 617.8 416.9 C623.7 420.3 629.7 423.8 635.6 428.4 C641.5 433.0 648.3 438.8 653.3 444.4 C658.3 450.0 662.5 456.3 665.8 462.2 C669.1 468.1 671.1 474.1 672.9 480.0 C674.7 485.9 675.7 492.0 676.4 497.8 C677.1 503.6 677.4 509.7 677.2 515.0 C677.0 520.3 676.2 525.2 675.4 529.8 C674.6 534.4 673.7 538.5 672.6 542.8 C671.5 547.1 670.5 551.1 668.9 555.7 C667.3 560.3 665.8 565.7 663.3 570.6 C660.8 575.5 658.7 580.2 654.1 585.4 C649.5 590.6 641.8 597.4 635.6 602.0 C629.4 606.6 623.2 610.0 617.0 613.1 C610.8 616.2 604.1 618.5 598.5 620.6 C592.9 622.8 588.9 624.5 583.3 626.0 C577.7 627.5 571.1 628.9 565.0 629.6 C558.9 630.3 553.1 630.3 546.7 630.2 C540.3 630.1 532.6 629.0 526.5 629.0 C520.4 629.0 517.8 630.3 510.0 630.5 C502.2 630.7 487.8 630.9 480.0 630.2 C472.2 629.5 469.3 628.1 463.0 626.5 C456.7 624.9 448.9 623.0 442.2 620.8 C435.5 618.5 427.7 615.2 423.0 613.0 C418.3 610.8 417.2 609.7 414.0 607.5 C410.8 605.3 407.8 603.2 404.0 600.0 C400.2 596.8 395.3 592.1 391.5 588.0 C387.7 583.9 383.9 579.5 381.0 575.5 C378.1 571.5 376.2 567.7 374.0 563.7 C371.8 559.8 369.6 555.8 368.0 551.8 C366.4 547.8 365.2 544.8 364.5 540.0 C363.8 535.2 363.7 528.5 363.6 523.0 C363.5 517.5 363.4 513.2 363.8 506.7 C364.2 500.2 364.9 490.4 366.0 484.0 C367.1 477.6 368.4 473.2 370.5 468.0 C372.6 462.8 375.4 457.7 378.7 452.8 C382.0 447.9 386.6 442.8 390.5 438.6 C394.4 434.5 398.4 430.7 402.4 427.9 C406.3 425.1 410.3 423.4 414.2 421.6 C418.1 419.8 421.6 418.7 425.5 416.9 C429.4 415.1 433.5 412.6 437.9 410.6 C442.3 408.6 447.5 406.4 451.7 405.0 C455.9 403.6 459.4 402.9 463.3 402.1 C467.2 401.3 471.5 400.6 475.0 400.3 C478.5 400.0 482.0 400.1 484.3 400.3 C486.6 400.5 486.7 400.9 489.0 401.5 C491.3 402.1 494.8 403.1 498.3 403.8Z" fill="#f47d48" stroke="#5e3420" stroke-width="1.4"/><rect x="363" y="400" width="314" height="231" fill="none" stroke="#808080" stroke-width="1.8"/><path d="M520.2 494v43M499.2 515.6h42" stroke="#c4906e" stroke-width="1.2"/></svg>
<div class="a" style="left:505.3px;top:379.3px;font-size:10.4px;color:#6a6a6a;line-height:1">4.989&#8243;</div>
<div class="a" style="left:704px;top:508px;font-size:10.4px;color:#6a6a6a;line-height:1">3.909&#8243;</div>
<svg class="a" style="left:337px;top:375px" width="24" height="24" viewBox="0 0 24 24"><circle cx="12" cy="12" r="11.3" fill="#52585e"/><path d="M6.3 6.6 L17.7 17.8M17.7 6.6 L6.3 17.8" stroke="#fff" stroke-width="1.6"/></svg>
<svg class="a" style="left:678px;top:375px" width="24" height="24" viewBox="0 0 24 24"><circle cx="12" cy="12" r="11.3" fill="#52585e"/><path d="M16.8 14.5 A5.2 5.2 0 1 1 16 8.6" stroke="#fff" stroke-width="1.7" fill="none"/><path d="M12.8 9.8 L17.9 10.6 L17.6 5.4Z" fill="#fff"/></svg>
<svg class="a" style="left:337px;top:632px" width="24" height="24" viewBox="0 0 24 24"><circle cx="12" cy="12" r="11.3" fill="#52585e"/><rect x="7.3" y="10.5" width="9.4" height="7" rx="1" stroke="#fff" stroke-width="1.5" fill="none"/><path d="M9.2 10.5V9a2.8 2.8 0 0 1 5.6 0v1.5" stroke="#fff" stroke-width="1.5" fill="none"/><rect x="11.3" y="12.6" width="1.4" height="2.6" fill="#fff"/></svg>
<svg class="a" style="left:678px;top:632px" width="24" height="24" viewBox="0 0 24 24"><circle cx="12" cy="12" r="11.3" fill="#52585e"/><path d="M8 8 L16.5 16.5" stroke="#fff" stroke-width="1.5"/><path d="M6.8 6.8 L11.5 7.6 L7.6 11.5Z M17.5 17.5 L12.8 16.7 L16.7 12.8Z" fill="#fff"/></svg>
<div class="a" style="left:212.8px;top:81.3px;width:278.5px;height:205.7px;background:#fff;border-radius:0 0 3px 3px;box-shadow:1px 4px 8px rgba(0,0,0,0.2), 0 0 1px rgba(0,0,0,0.3)"></div>
<div class="a" style="left:57px;top:79.6px;width:1143px;height:1.6px;background:#c2c2c2"></div>
<div class="a" style="left:435.9px;top:95.6px;width:41.9px;height:20.4px;background:#4a4d52;border-radius:10.2px;color:#fff;font-size:11px;font-weight:bold;line-height:20.4px;text-align:center">Beta</div>
<div class="a" style="left:226.3px;top:135.5px;font-size:12px;color:#575757;line-height:1">Distance</div>
<svg class="a" style="left:226px;top:157px" width="18" height="17" viewBox="0 0 18 17"><path d="M9 1.2 L16.4 6.6 L13.6 15.4 L4.4 15.4 L1.6 6.6Z" stroke="#888" stroke-width="1.1" fill="none" stroke-linejoin="round"/><path d="M9 4.6 L12.9 7.4 L11.4 12 L6.6 12 L5.1 7.4Z" stroke="#999" stroke-width="0.9" fill="none" stroke-dasharray="1.2 1.2"/></svg>
<div class="a" style="left:252px;top:167.6px;width:127px;height:1.3px;background:#dcdcdc"></div>
<div class="a" style="left:315px;top:161.2px;width:13.2px;height:13.2px;background:#4e5156;border-radius:50%"></div>
<svg class="a" style="left:388px;top:157px" width="18" height="18" viewBox="0 0 18 18"><circle cx="8.5" cy="9" r="4.5" stroke="#888" stroke-width="1.1" fill="none"/><g fill="#999"><circle cx="8.5" cy="1.8" r="0.9"/><circle cx="8.5" cy="16.2" r="0.9"/><circle cx="1.3" cy="9" r="0.9"/><circle cx="15.7" cy="9" r="0.9"/><circle cx="3.4" cy="3.9" r="0.9"/><circle cx="13.6" cy="3.9" r="0.9"/><circle cx="3.4" cy="14.1" r="0.9"/><circle cx="13.6" cy="14.1" r="0.9"/></g></svg>
<div class="a" style="left:414.3px;top:158.5px;width:45.5px;height:15.2px;border:1px solid #cfcfcf;border-radius:3px;background:#fff"></div>
<div class="a" style="left:419.8px;top:162.3px;font-size:9.6px;color:#8a8a8a;line-height:1">0.05</div>
<div class="a" style="left:438px;top:161px;width:1px;height:10px;background:#333"></div>
<div class="a" style="left:468.8px;top:160.5px;font-size:11.5px;color:#666;line-height:1">in</div>
<div class="a" style="left:226.5px;top:192.5px;font-size:11.6px;color:#575757;line-height:1">Corner</div>
<svg class="a" style="left:223px;top:215px" width="85" height="20" viewBox="0 0 85 20"><circle cx="8.5" cy="9" r="5.8" fill="#cfe3fb"/><circle cx="8.5" cy="9" r="4" fill="#1a6fe0"/><path d="M18.6 4.9 C24 5.2 31.5 9.5 32.3 17.1" stroke="#666" stroke-width="1.2" fill="none"/><circle cx="51.2" cy="9" r="5" stroke="#888" stroke-width="1.1" fill="#fff"/><path d="M62.2 4.9 H76 V17.1" stroke="#666" stroke-width="1.2" fill="none"/></svg>
<div class="a" style="left:225.7px;top:254px;width:115.5px;height:21px;background:#adadad;border-radius:10.5px;color:#e4e4e4;font-size:10.5px;font-weight:bold;letter-spacing:0.5px;line-height:22.4px;text-align:center">Cancel</div>
<div class="a" style="left:362.2px;top:254px;width:115.6px;height:21px;background:#17a577;border-radius:10.5px;color:#f4f4f4;font-size:10.2px;font-weight:bold;letter-spacing:0.6px;line-height:22.4px;text-align:center">Apply</div>
<svg class="a" style="left:401.7px;top:166.7px" width="27" height="33" viewBox="0 0 24.5 30"><path d="M3 3 L3.6 24.5 L8.2 20 L13.2 27.6 L16 26 L11.9 19.4 L20 18.6Z" fill="#000" stroke="#fff" stroke-width="1" stroke-linejoin="round"/></svg>
<svg class="a" style="left:0;top:540px" width="150" height="120" viewBox="0 540 150 120"><ellipse cx="73.5" cy="604.6" rx="55.6" ry="43" fill="#c43a1e"/><text x="30" y="600.5" font-family="Liberation Serif" font-style="italic" fill="#fff"><tspan font-size="34">C</tspan><tspan font-size="24.5">raft</tspan></text><text x="95.5" y="597.3" font-family="Liberation Serif" font-weight="bold" font-size="7.6" fill="#fff">WITH</text><path d="M93.5 602 C99 598.5 106 603.5 112 601.5 C115 600.5 117.5 599.5 119.5 598.5" stroke="#fff" stroke-width="1.3" fill="none"/><text x="37.5" y="631" font-family="Liberation Serif" font-style="italic" fill="#fff"><tspan font-size="36">S</tspan><tspan font-size="26">arah</tspan></text><path d="M67 612 C76 606 92 605 99 610 C103 613 108 612 109 608 C109.5 605 106 604.5 104.5 607" stroke="#fff" stroke-width="1" fill="none"/><path d="M31.5 587 C28 581 33 577.5 40 579 M75.5 601 C75 607 72 611 68 610 C65 609 66.5 605.5 70 606.5" stroke="#fff" stroke-width="1.1" fill="none"/><path d="M42 628 C37 628 36 633.5 41 634 C44 634.3 46 632 45.5 630" stroke="#fff" stroke-width="1" fill="none"/></svg>
</body></html>
